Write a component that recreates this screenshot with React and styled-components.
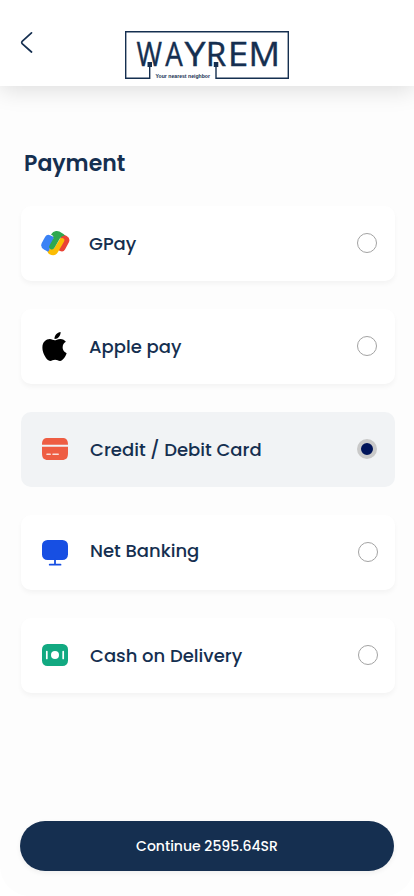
import React, { useState } from "react";
import styled, { createGlobalStyle } from "styled-components";
import { FaApple } from "react-icons/fa";

const navy = "#152f50";

const GlobalStyle = createGlobalStyle`
  *, *::before, *::after { box-sizing: border-box; }
  body { margin: 0; background: #fff; font-family: Poppins, Inter, sans-serif; color: ${navy}; }
`;

const Screen = styled.div`
  width: 414px;
  height: 896px;
  display: flex;
  flex-direction: column;
  overflow: hidden;
  background: #fdfdfd;
  border-radius: 0 0 30px 30px;
`;

const Header = styled.header`
  flex: none;
  display: flex;
  align-items: flex-start;
  height: 86px;
  padding: 31px 0 0 20px;
  background: #fff;
  box-shadow: 0 4px 22px rgba(0, 0, 0, 0.13);
`;

const BackButton = styled.button`
  width: 14px;
  height: 22px;
  margin-right: 91px;
  padding: 0;
  border: 0;
  background: none;
  svg { display: block; }
`;

const Logo = styled.svg`
  display: block;
`;

const Title = styled.h1`
  margin: 63px 0 0 24px;
  height: 30px;
  font-size: 22px;
  line-height: 30px;
  font-weight: 600;
`;

const Options = styled.div`
  display: flex;
  flex-direction: column;
  gap: 28px;
  padding: 27px 19px 0 21px;
`;

const Option = styled.label`
  display: flex;
  align-items: center;
  height: 75px;
  padding: 0 ${(p) => p.$endGap}px 1px 20px;
  border-radius: 10px;
  background: ${(p) => (p.$selected ? "#f1f3f5" : "#fff")};
  box-shadow: ${(p) => (p.$selected ? "none" : "0 3px 5px rgba(0, 0, 0, 0.04)")};
`;

const IconSlot = styled.span`
  display: flex;
  align-items: center;
  justify-content: center;
  width: 28px;
  height: 34px;
  margin-right: ${(p) => p.$gap}px;
  padding-top: ${(p) => p.$drop}px;
  color: #000;
  svg { flex: none; }
`;

const AppleIcon = styled(FaApple)`
  margin-right: 1px;
`;

const OptionName = styled.span`
  flex: 1;
  height: 24px;
  margin-bottom: ${(p) => p.$lift}px;
  font-size: 18px;
  line-height: 26px;
  font-weight: 500;
  white-space: nowrap;
`;

const Radio = styled.input`
  appearance: none;
  width: 20px;
  height: 20px;
  margin: 0;
  border: 1px solid #a3a3a3;
  border-radius: 50%;
  background: #fff;
  &:checked { border: 4px solid #c9c9c9; background: #00145a; }
`;

const ContinueButton = styled.button`
  flex: none;
  height: 50px;
  margin: auto 20px 25px;
  padding: 0;
  border: 0;
  border-radius: 25px;
  background: ${navy};
  box-shadow: 0 2px 5px rgba(0, 0, 0, 0.06);
  color: #fff;
  font: 500 14px/50px Poppins, Inter, sans-serif;
`;

const GPayIcon = () => (
  <svg width="29" height="25" viewBox="0 0 29 25">
    <path fill="#ea4335" d="M20 4.500Q22 3 25.700 5Q29.800 7.500 27.800 11.500L24 18.500Q22.300 21.800 18.500 19.800L17 18.500Z" />
    <path fill="#fbbc04" d="M23.300 8.300Q21.500 6 19.200 7.500L13 17.500 6.500 18.500Q6 22 8.500 23.300 14 26 17 21L22.500 11.500Q23.700 9.800 23.300 8.300Z" />
    <path fill="#3b82f5" d="M4.200 5.800Q6 2.900 9 4.200L13.300 6.300 8 19.500 7 20.800 3 18.600Q-1.200 16 .9 11.800Z" />
    <path fill="#2fa84f" d="M10 3.500Q13-1.500 18.400.6L22.500 3Q23.800 4 23.800 4.700 20.800 4.300 19 7.200L13.500 16.800Q12 19.500 9.200 18Q7.300 16.700 8.500 14.500L12.300 7.800Q13.500 5 10 3.500Z" />
  </svg>
);

const CardIcon = () => (
  <svg width="26" height="22" viewBox="0 0 26 22">
    <path fill="#ee5d43" d="M0 6.800C0 1.700 1.700 0 6 0h14c4.300 0 6 1.700 6 6.800ZM0 8.800h26V15c0 5-1.700 7-6 7H6c-4.300 0-6-2-6-7Z" />
    <path stroke="#f9ddd8" strokeWidth="1.600" strokeLinecap="round" d="M5 16.300h3.200M11 16.300h5.200" />
  </svg>
);

const MonitorIcon = () => (
  <svg width="26" height="26" viewBox="0 0 26 26">
    <rect width="26" height="20" rx="5.500" fill="#174fe3" />
    <path d="M13 19v5M7.700 24.700h10.800" stroke="#174fe3" strokeWidth="1.800" strokeLinecap="round" />
  </svg>
);

const CashIcon = () => (
  <svg width="26" height="22" viewBox="0 0 26 22">
    <rect width="26" height="22" rx="5.300" fill="#12a981" />
    <circle cx="13" cy="11" r="4" fill="#fff" />
    <path d="M4.800 7.500v7M21.200 7.500v7" stroke="#fff" strokeWidth="1.700" strokeLinecap="round" />
  </svg>
);

const methods = [
  { id: "gpay", name: "GPay", icon: <GPayIcon />, gap: 20, drop: 0, lift: 0, endGap: 18 },
  { id: "apple", name: "Apple pay", icon: <AppleIcon size={33} />, gap: 20, drop: 0, lift: 0, endGap: 18 },
  { id: "card", name: "Credit / Debit Card", icon: <CardIcon />, gap: 21, drop: 0, lift: 0, endGap: 18 },
  { id: "net", name: "Net Banking", icon: <MonitorIcon />, gap: 21, drop: 2, lift: 4, endGap: 17 },
  { id: "cash", name: "Cash on Delivery", icon: <CashIcon />, gap: 21, drop: 0, lift: 0, endGap: 17 },
];

const wordmark = [
  ["W", 11.500, 25.500],
  ["A", 40.300, 17.500],
  ["Y", 59.500, 21],
  ["R", 80.800, 20.500],
  ["E", 102.700, 20.500],
  ["M", 123.400, 31.500],
];

const BrandLogo = () => (
  <Logo width="164" height="48" viewBox="0 0 164 48">
    <path d="M24.700 35V47.300H.7V.7H163.300V47.300H91V35" fill="none" stroke={navy} strokeWidth="1.400" />
    <path fill={navy} d="M22.500 31h4.500v5h-4.500zM88.800 31h4.500v5h-4.500z" />
    <g fill={navy} stroke={navy} strokeWidth="0.400" fontFamily="Open Sans, sans-serif" fontSize="32" fontWeight="500">
      {wordmark.map(([letter, x, width]) => (
        <text key={letter} x={x} y="35.300" textLength={width} lengthAdjust="spacingAndGlyphs">{letter}</text>
      ))}
    </g>
    <text x="30.500" y="47" fill={navy} fontFamily="Liberation Sans, sans-serif" fontSize="5.400" fontWeight="600" textLength="54.500" lengthAdjust="spacingAndGlyphs">Your nearest neighbor</text>
  </Logo>
);

export default function App() {
  const [selected, setSelected] = useState("card");
  return (
    <>
      <GlobalStyle />
      <Screen>
        <Header>
          <BackButton aria-label="Back">
            <svg width="14" height="22" viewBox="0 0 14 22">
              <path d="M11.500 1.800 2.400 10.200Q1 11.500 2.400 12.900L11.500 21" fill="none" stroke={navy} strokeWidth="1.700" strokeLinecap="round" />
            </svg>
          </BackButton>
          <BrandLogo />
        </Header>
        <Title>Payment</Title>
        <Options>
          {methods.map((m) => (
            <Option key={m.id} $selected={selected === m.id} $endGap={m.endGap}>
              <IconSlot $gap={m.gap} $drop={m.drop}>{m.icon}</IconSlot>
              <OptionName $lift={m.lift}>{m.name}</OptionName>
              <Radio type="radio" name="method" checked={selected === m.id} onChange={() => setSelected(m.id)} />
            </Option>
          ))}
        </Options>
        <ContinueButton>Continue 2595.64SR</ContinueButton>
      </Screen>
    </>
  );
}
